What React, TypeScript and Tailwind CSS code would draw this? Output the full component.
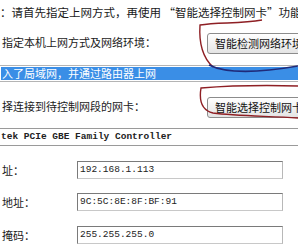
import React from "react";

const cjk = { fontFamily: '"Noto Sans CJK SC", "Noto Sans", sans-serif' };
const mono = { fontFamily: '"Liberation Mono", "DejaVu Sans Mono", monospace' };

function WinButton({ label }: { label: string }) {
  return (
    <button
      className="h-[21px] w-[120px] shrink-0 rounded-[3px] border border-[#8c8c8c] bg-gradient-to-b from-white to-[#e4e4e4] pl-[7px] text-left text-[11px] leading-none text-[#111] whitespace-nowrap overflow-hidden"
      style={cjk}
    >
      {label}
    </button>
  );
}

function Field({ label, value, mt }: { label: string; value: string; mt: string }) {
  return (
    <div className={`flex items-center ${mt}`}>
      <div className="w-[77px] pl-[2px] text-[11px] text-[#1a1a1a]" style={cjk}>{label}</div>
      <div className="flex h-[18px] w-[206px] items-center border border-t-[#7a7a7a] border-l-[#7a7a7a] border-r-[#b8b8b8] border-b-[#c8c8c8] bg-white pl-[2px] text-[9.5px] text-[#222]" style={mono}>
        {value}
      </div>
    </div>
  );
}

export default function App() {
  return (
    <div className="relative h-[252px] w-[298px] overflow-hidden bg-white">
      <div className="flex flex-col">
        <div className="flex h-[26px] items-center whitespace-nowrap text-[11.5px] text-[#1a1a1a]" style={cjk}>
          ：请首先指定上网方式，再使用 “智能选择控制网卡”功能!
        </div>

        <div className="mt-[4px] flex items-center justify-between">
          <span className="pl-[2px] text-[11px] text-[#1a1a1a]" style={cjk}>指定本机上网方式及网络环境：</span>
          <div className="w-[91px] overflow-visible"><WinButton label="智能检测网络环境" /></div>
        </div>

        <div className="mt-[11px] -ml-[1px] h-[17px] w-[310px] border border-[#b4b4b4] p-[1px]">
          <div className="flex h-full items-center bg-[#3a8ee6] pl-[1px] text-[11px] leading-none text-white whitespace-nowrap" style={cjk}>
            入了局域网，并通过路由器上网
          </div>
        </div>

        <div className="mt-[12px] flex items-center justify-between">
          <span className="pl-[2px] text-[11px] text-[#1a1a1a]" style={cjk}>择连接到待控制网段的网卡：</span>
          <div className="w-[91px] overflow-visible"><WinButton label="智能选择控制网卡" /></div>
        </div>

        <div className="mt-[10px] -ml-[1px] flex h-[18px] w-[310px] items-center border border-[#9a9a9a] bg-white pl-[1px] text-[9.5px] font-bold text-[#222] whitespace-nowrap" style={mono}>
          tek PCIe GBE Family Controller
        </div>

        <Field label="址：" value="192.168.1.113" mt="mt-[15px]" />
        <Field label="地址：" value="9C:5C:8E:8F:BF:91" mt="mt-[14px]" />
        <Field label="掩码：" value="255.255.255.0" mt="mt-[15px]" />

        <div className="mt-[14px] ml-[77px] h-[18px] w-[206px] border border-[#e6e6e6]" />
      </div>

      <svg className="pointer-events-none absolute left-0 top-0" width="298" height="252" fill="none">
        <path d="M262 20 C240 24 218 22 200 25 C199 40 202 57 213 67" stroke="#8e1f24" strokeWidth="1.4" />
        <path d="M209 65 C225 73 252 74 298 66" stroke="#1f2a7a" strokeWidth="1.6" />
        <path d="M298 86 C262 85 226 86 201 88 C199 100 201 110 213 113 C236 116 266 116 298 118" stroke="#8e1f24" strokeWidth="1.4" />
      </svg>
    </div>
  );
}
